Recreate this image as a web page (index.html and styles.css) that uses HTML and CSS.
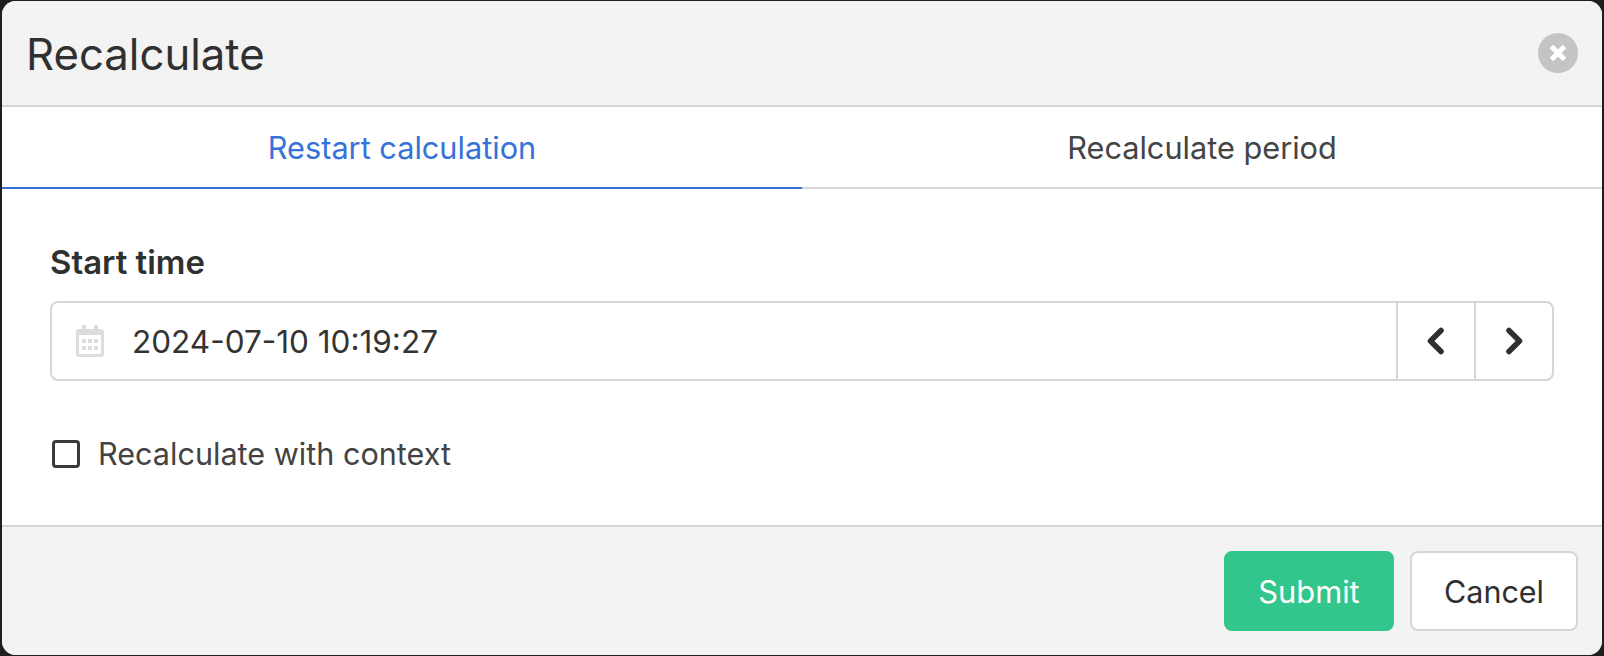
FILE: index.html
```html
<!DOCTYPE html>
<html lang="en">
<head>
<meta charset="utf-8">
<title>Recalculate</title>
<link rel="stylesheet" href="styles.css">
</head>
<body>
<div class="dialog">
  <header class="head">
    <h1 class="title">Recalculate</h1>
    <button class="close" type="button" aria-label="Close">
      <svg viewBox="0 0 40 40" width="40" height="40"><circle cx="20" cy="20" r="20" fill="#c4c4c4"/><path d="M13.500 13.500l13 13M26.500 13.500l-13 13" stroke="#fff" stroke-width="5"/></svg>
    </button>
  </header>
  <nav class="tabs">
    <div class="tab active">Restart calculation</div>
    <div class="tab">Recalculate period</div>
  </nav>
  <main class="body">
    <div class="label">Start time</div>
    <div class="field">
      <div class="input">
        <svg class="cal" viewBox="0 0 28 32" width="28" height="32">
          <path fill="#dcdcdc" fill-rule="evenodd" d="M6 0h4v4h8V0h4v4h3a3 3 0 0 1 3 3v22a3 3 0 0 1-3 3H3a3 3 0 0 1-3-3V7a3 3 0 0 1 3-3h3zM3 10v19h22V10z"/>
          <path fill="#dcdcdc" d="M6 14h4v4H6zM12 14h4v4h-4zM18 14h4v4h-4zM6 21h4v4H6zM12 21h4v4h-4zM18 21h4v4h-4z"/>
        </svg>
        <span class="date">2024-07-10 10:19:27</span>
      </div>
      <button class="step" type="button" aria-label="Previous">
        <svg viewBox="0 0 18 28" width="18" height="28"><path d="M14 3.500L3.500 14 14 24.500" fill="none" stroke="#2f2f2f" stroke-width="5.500" stroke-linecap="round" stroke-linejoin="round"/></svg>
      </button>
      <button class="step" type="button" aria-label="Next">
        <svg viewBox="0 0 18 28" width="18" height="28"><path d="M4 3.500L14.500 14 4 24.500" fill="none" stroke="#2f2f2f" stroke-width="5.500" stroke-linecap="round" stroke-linejoin="round"/></svg>
      </button>
    </div>
    <label class="check"><span class="box"></span><span class="check-text">Recalculate with context</span></label>
  </main>
  <footer class="foot">
    <button class="btn primary" type="button">Submit</button>
    <button class="btn" type="button">Cancel</button>
  </footer>
</div>
</body>
</html>
```
FILE: styles.css
```css
* { box-sizing: border-box; }
html, body { height: 100%; }
body {
  margin: 0;
  padding: 1px 2px;
  background: #1f1f1f;
  font-family: Inter, "Liberation Sans", sans-serif;
  color: #303030;
}
.dialog {
  height: 654px;
  display: flex;
  flex-direction: column;
  background: #fff;
  border-radius: 14px;
  overflow: hidden;
}
.head {
  height: 106px;
  flex: none;
  display: flex;
  align-items: center;
  justify-content: space-between;
  padding: 0 24px 0 24px;
  background: #f3f3f3;
  border-bottom: 2px solid #d6d6d6;
}
.title { margin: 2px 0 0; font-size: 43.700px; font-weight: 400; }
.close { padding: 0; border: 0; background: none; display: flex; }
.tabs {
  height: 82px;
  flex: none;
  display: flex;
  border-bottom: 2px solid #d6d6d6;
}
.tab {
  flex: 1;
  display: flex;
  align-items: center;
  justify-content: center;
  padding-top: 1px;
  font-size: 30.700px;
  color: #444;
  margin-bottom: -2px;
  border-bottom: 2px solid transparent;
}
.tab.active { color: #3572d9; border-bottom-color: #3572d9; }
.body { flex: 1; padding: 0 48px; }
.label { margin-top: 55px; font-size: 32.900px; line-height: 36px; font-weight: 600; }
.field {
  margin-top: 21px;
  height: 80px;
  display: flex;
  border: 2px solid #d6d6d6;
  border-radius: 8px;
}
.input { flex: 1; display: flex; align-items: center; padding-left: 24px; }
.cal { flex: none; }
.date { margin-left: 28px; font-size: 31.500px; color: #333; }
.step {
  width: 78px;
  padding: 0;
  border: 0;
  border-left: 2px solid #d6d6d6;
  background: none;
  display: flex;
  align-items: center;
  justify-content: center;
}
.check { margin-top: 54px; display: flex; align-items: center; }
.box { width: 28px; height: 28px; margin-left: 2px; border: 3px solid #3a3a3a; border-radius: 4px; }
.check-text { margin-left: 18px; font-size: 30.600px; color: #434343; }
.foot {
  height: 130px;
  flex: none;
  display: flex;
  justify-content: flex-end;
  gap: 16px;
  padding: 24px 24px 0 0;
  background: #f3f3f3;
  border-top: 2px solid #d6d6d6;
}
.btn {
  height: 80px;
  width: 168px;
  padding-top: 2px;
  font: 400 30.500px Inter, "Liberation Sans", sans-serif;
  color: #303030;
  background: #fff;
  border: 2px solid #d6d6d6;
  border-radius: 8px;
}
.btn.primary { width: 170px; font-size: 30.800px; color: #fff; background: #32c58c; border-color: #32c58c; }
```
